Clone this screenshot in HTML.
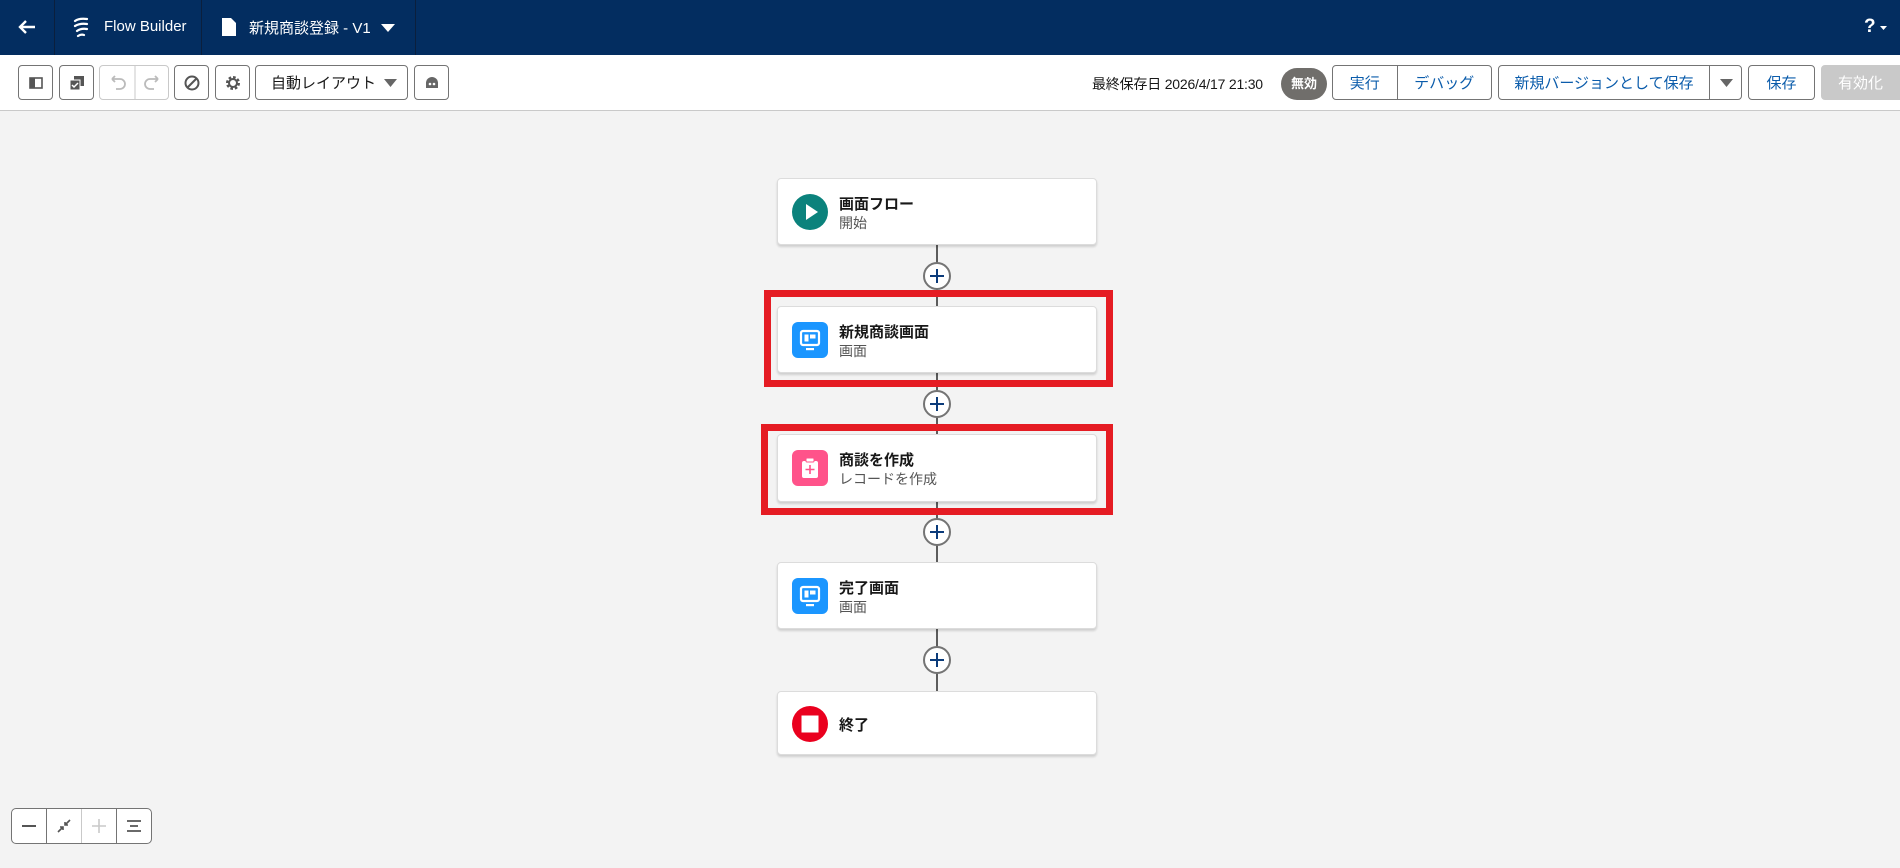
<!DOCTYPE html>
<html><head><meta charset="utf-8">
<style>
*{box-sizing:border-box;margin:0;padding:0}
body{width:1900px;height:868px;overflow:hidden;background:#f3f3f3;font-family:"Liberation Sans","Noto Sans CJK JP",sans-serif;position:relative;color:#181818}
.hdr{position:absolute;left:0;top:0;width:1900px;height:55px;background:#032d60;color:#fff}
.vd{position:absolute;top:0;width:1px;height:55px;background:#0b1f3d}
.tb{position:absolute;left:0;top:55px;width:1900px;height:56px;background:#fff;border-bottom:1px solid #c9c9c9}
.b{position:absolute;top:10px;height:35px;border:1px solid #747474;border-radius:4px;background:#fff;display:flex;align-items:center;justify-content:center;font-size:15px;color:#0b5cab}
.node{position:absolute;left:777px;width:320px;height:67px;background:#fff;border:1px solid #dcdcdc;border-radius:4px;box-shadow:0 2px 2px rgba(0,0,0,.15)}
.ic{position:absolute;left:14px;top:15px;width:36px;height:36px;border-radius:6px}
.t1{position:absolute;left:61px;top:14px;font-size:15px;font-weight:bold}
.t2{position:absolute;left:61px;top:34px;font-size:14px;color:#555}
.line{position:absolute;left:936px;width:2px;background:#5c5c5c}
.plus{position:absolute;left:923px;width:28px;height:28px;border-radius:50%;border:2px solid #747474;background:#fff}
.plus:before{content:"";position:absolute;left:5px;top:11px;width:14px;height:2px;background:#0b3b7a}
.plus:after{content:"";position:absolute;left:11px;top:5px;width:2px;height:14px;background:#0b3b7a}
.red{position:absolute;border:7px solid #e51c23}
</style></head><body>
<div class="hdr">
  <svg style="position:absolute;left:17px;top:17px" width="20" height="20" viewBox="0 0 20 20"><path d="M18 10H3M9 4L3 10l6 6" stroke="#fff" stroke-width="2.4" fill="none"/></svg>
  <div class="vd" style="left:54px"></div>
  <svg style="position:absolute;left:73px;top:17px" width="18" height="22" viewBox="0 0 18 22"><path d="M2 4q4-3 12-2M2 9q5-3 12-2M4 14q4-3 10-2M5 19q3-2 6-1" stroke="#fff" stroke-width="2.2" fill="none" stroke-linecap="round"/></svg>
  <div style="position:absolute;left:104px;top:18px;font-size:15px">Flow Builder</div>
  <div class="vd" style="left:201px"></div>
  <svg style="position:absolute;left:221px;top:17px" width="16" height="20" viewBox="0 0 16 20"><path d="M1 1h9l5 5v13H1z" fill="#fff"/></svg>
  <div style="position:absolute;left:249px;top:17px;font-size:15px">新規商談登録 - V1</div>
  <svg style="position:absolute;left:381px;top:24px" width="14" height="9"><path d="M0 0h14L7 8z" fill="#fff"/></svg>
  <div class="vd" style="left:415px"></div>
  <div style="position:absolute;left:1864px;top:16px;font-size:19px;font-weight:bold">?</div>
  <svg style="position:absolute;left:1880px;top:26px" width="7" height="5"><path d="M0 0h7L3.5 4z" fill="#fff"/></svg>
</div>
<div class="tb">
  <div class="b" style="left:18px;width:35px"><svg width="14" height="12"><rect x="1" y="1" width="12" height="10" fill="none" stroke="#555" stroke-width="1.6"/><rect x="1" y="1" width="5" height="10" fill="#555"/></svg></div>
  <div class="b" style="left:59px;width:35px"><svg width="16" height="16"><rect x="5" y="1" width="10" height="10" fill="#555"/><rect x="1" y="5" width="10" height="10" fill="#555" stroke="#fff" stroke-width="1"/><path d="M3 10l2 2 4-4" stroke="#fff" stroke-width="1.5" fill="none"/></svg></div>
  <div class="b" style="left:99px;width:70px;border-color:#c9c9c9"><svg width="70" height="35"><line x1="35" y1="0" x2="35" y2="35" stroke="#c9c9c9"/><path d="M12 14h8a5 5 0 010 10h-4M12 14l3-3M12 14l3 3" stroke="#bbb" stroke-width="1.8" fill="none"/><path d="M58 14h-8a5 5 0 000 10h4M58 14l-3-3M58 14l-3 3" stroke="#bbb" stroke-width="1.8" fill="none"/></svg></div>
  <div class="b" style="left:174px;width:35px"><svg width="16" height="16"><circle cx="8" cy="8" r="6.5" fill="none" stroke="#555" stroke-width="2"/><line x1="3.5" y1="12.5" x2="12.5" y2="3.5" stroke="#555" stroke-width="2"/></svg></div>
  <div class="b" style="left:215px;width:35px"><svg width="16" height="16"><circle cx="8" cy="8" r="5.5" fill="none" stroke="#555" stroke-width="3" stroke-dasharray="2.5 1.8"/><circle cx="8" cy="8" r="4" fill="none" stroke="#555" stroke-width="2"/></svg></div>
  <div class="b" style="left:255px;width:153px;color:#181818;justify-content:flex-start;padding-left:15px">自動レイアウト<svg style="position:absolute;right:10px;top:13px" width="13" height="8"><path d="M0 0h13L6.5 8z" fill="#666"/></svg></div>
  <div class="b" style="left:414px;width:35px"><svg width="16" height="14"><path d="M2 12V7a6 6 0 0112 0v5z" fill="#666"/><circle cx="6" cy="8" r="1.3" fill="#fff"/><circle cx="10" cy="8" r="1.3" fill="#fff"/></svg></div>
  <div style="position:absolute;left:1092px;top:19px;font-size:14px;letter-spacing:-0.2px;white-space:nowrap">最終保存日 2026/4/17 21:30</div>
  <div style="position:absolute;left:1281px;top:13px;width:46px;height:32px;border-radius:16px;background:#706e6b;color:#fff;font-size:13px;font-weight:bold;text-align:center;line-height:32px">無効</div>
  <div class="b" style="left:1332px;width:160px;justify-content:flex-start"><span style="width:64px;text-align:center">実行</span><span style="width:1px;height:35px;background:#747474"></span><span style="width:94px;text-align:center">デバッグ</span></div>
  <div class="b" style="left:1498px;width:244px;justify-content:flex-start"><span style="width:210px;text-align:center">新規バージョンとして保存</span><span style="width:1px;height:35px;background:#747474"></span><svg style="margin-left:10px" width="13" height="8"><path d="M0 0h13L6.5 8z" fill="#666"/></svg></div>
  <div class="b" style="left:1748px;width:67px">保存</div>
  <div class="b" style="left:1821px;width:85px;background:#c9c9c9;border-color:#c9c9c9;color:#fff;justify-content:flex-start;padding-left:16px">有効化</div>
</div>

<div class="line" style="top:245px;height:446px"></div>
<div class="red" style="left:764px;top:290px;width:349px;height:97px"></div>
<div class="red" style="left:761px;top:424px;width:352px;height:91px"></div>

<div class="node" style="top:178px"><div class="ic" style="background:#0b827c;border-radius:50%"><svg width="36" height="36"><path d="M14 10l12 8-12 8z" fill="#fff"/></svg></div><div class="t1">画面フロー</div><div class="t2">開始</div></div>
<div class="plus" style="top:262px"></div>
<div class="node" style="top:306px"><div class="ic" style="background:#1b96ff"><svg width="36" height="36"><rect x="9" y="9" width="18" height="14" rx="2" fill="none" stroke="#fff" stroke-width="2.2"/><rect x="12.5" y="12.5" width="4" height="7" fill="#fff"/><rect x="18" y="12.5" width="5.5" height="4" fill="#fff"/><rect x="14" y="26" width="8" height="2.2" fill="#fff"/></svg></div><div class="t1">新規商談画面</div><div class="t2">画面</div></div>
<div class="plus" style="top:390px"></div>
<div class="node" style="top:434px;height:68px"><div class="ic" style="background:#ff538a"><svg width="36" height="36"><rect x="10" y="11" width="16" height="17" rx="2" fill="#fff"/><rect x="14" y="8" width="8" height="4" rx="1" fill="#fff" stroke="#ff538a" stroke-width="1"/><path d="M18 15v9M13.5 19.5h9" stroke="#ff538a" stroke-width="1.6"/></svg></div><div class="t1">商談を作成</div><div class="t2">レコードを作成</div></div>
<div class="plus" style="top:518px"></div>
<div class="node" style="top:562px"><div class="ic" style="background:#1b96ff"><svg width="36" height="36"><rect x="9" y="9" width="18" height="14" rx="2" fill="none" stroke="#fff" stroke-width="2.2"/><rect x="12.5" y="12.5" width="4" height="7" fill="#fff"/><rect x="18" y="12.5" width="5.5" height="4" fill="#fff"/><rect x="14" y="26" width="8" height="2.2" fill="#fff"/></svg></div><div class="t1">完了画面</div><div class="t2">画面</div></div>
<div class="plus" style="top:646px"></div>
<div class="node" style="top:691px;height:64px"><div class="ic" style="background:#ea001e;border-radius:50%;top:14px"><svg width="36" height="36"><rect x="9.5" y="9.5" width="17" height="17" fill="#fff"/></svg></div><div class="t1" style="top:22px">終了</div></div>

<div style="position:absolute;left:11px;top:808px;width:141px;height:36px;border:1px solid #747474;border-radius:5px;background:#fff;display:flex">
  <div style="width:35px;border-right:1px solid #747474;display:flex;align-items:center;justify-content:center"><svg width="14" height="2"><rect width="14" height="2" fill="#555"/></svg></div>
  <div style="width:35px;border-right:1px solid #c9c9c9;display:flex;align-items:center;justify-content:center"><svg width="14" height="14"><path d="M1 13l5-5M8 6l5-5M3 8h3v3M11 6H8V3" stroke="#555" stroke-width="1.6" fill="none"/></svg></div>
  <div style="width:35px;border-right:1px solid #747474;display:flex;align-items:center;justify-content:center"><svg width="14" height="14"><path d="M7 0v14M0 7h14" stroke="#c9c9c9" stroke-width="1.6"/></svg></div>
  <div style="width:34px;display:flex;align-items:center;justify-content:center"><svg width="14" height="12"><path d="M0 1h14M3 6h8M0 11h14" stroke="#555" stroke-width="1.8"/></svg></div>
</div>
</body></html>
